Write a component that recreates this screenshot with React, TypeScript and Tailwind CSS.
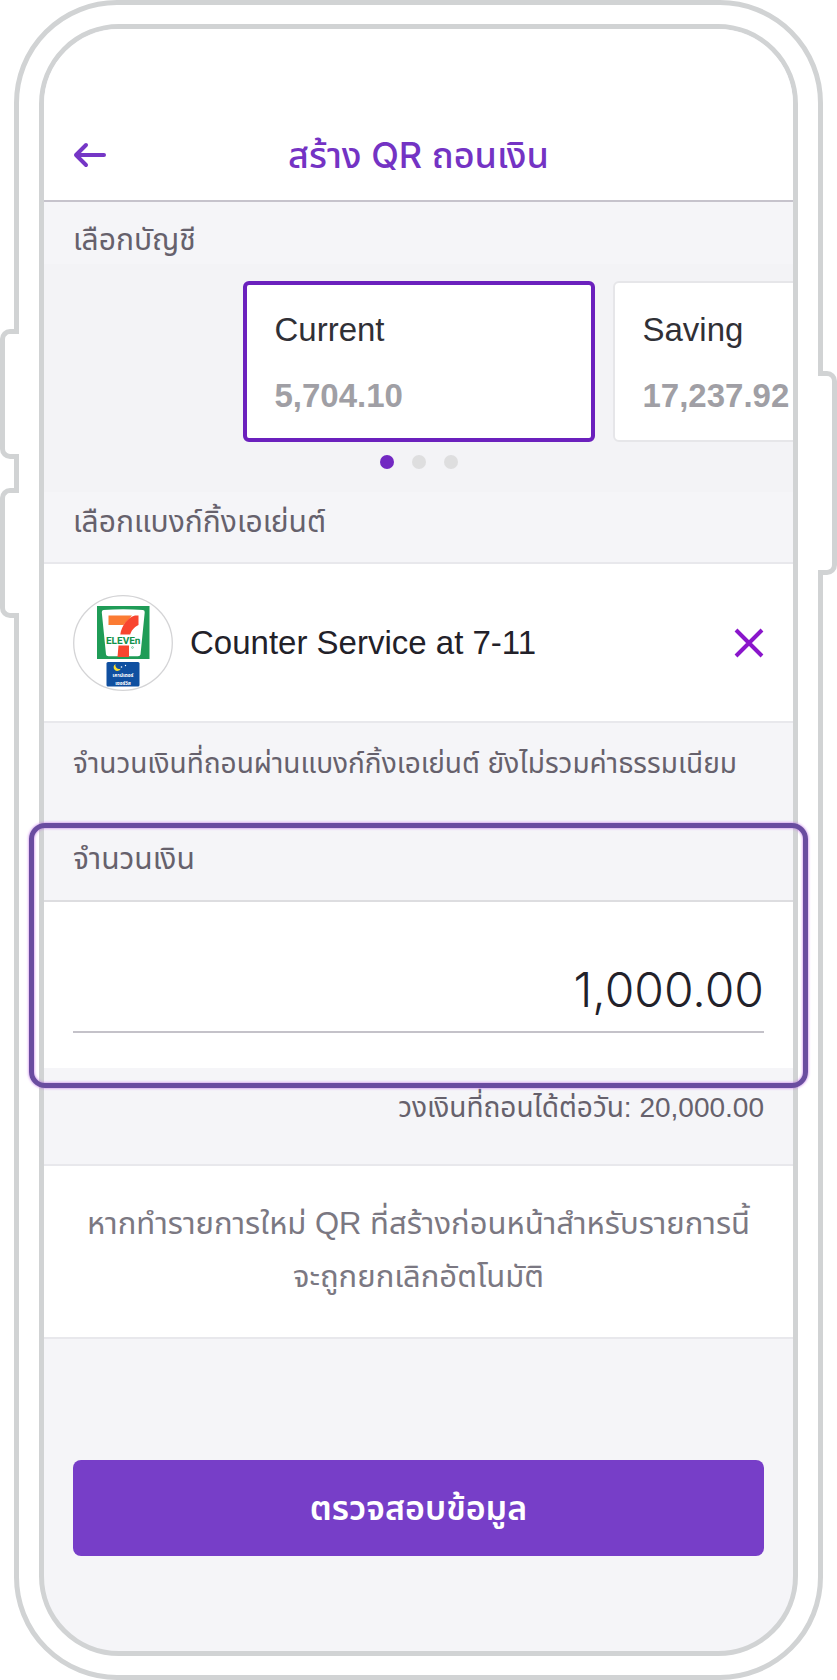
import { useState } from 'react';

const accounts = [
  { name: 'Current', balance: '5,704.10' },
  { name: 'Saving', balance: '17,237.92' },
];

function SevenElevenLogo() {
  return (
    <svg viewBox="0 0 100 96" className="h-[96px] w-[100px] shrink-0" role="img" aria-label="7-Eleven Counter Service">
      <ellipse cx="50" cy="48" rx="49.3" ry="47.3" fill="#fff" stroke="#d4d4d6" strokeWidth="1.3" />
      <rect x="24" y="11" width="52.5" height="53" fill="#1f9c57" />
      <path d="M30.5 15 Q50 13.6 70 15 Q72 15 71.7 17.5 L67.5 59.5 Q67.2 61.2 65 61.2 L35.5 61.2 Q33.3 61.2 33 59.5 L28.8 17.5 Q28.5 15 30.5 15 Z" fill="#fff" />
      <path d="M35.5 20.5 H59 L50.5 30 H35.5 Z" fill="#fb7b33" />
      <path d="M65.5 20.5 V30 C60.5 32.5 58.2 36 57.2 39.5 H47.3 C48.5 31 54.5 22.5 62 20.5 Z" fill="#f8452f" />
      <path d="M45.5 50.5 H56 V62 H44.5 Z" fill="#f8452f" />
      <text x="50.2" y="48.8" textAnchor="middle" fontFamily="Liberation Sans Narrow, Roboto, sans-serif" fontWeight="700" fontSize="10" textRendering="geometricPrecision" fill="#12924a">
        ELEVEn
      </text>
      <circle cx="59.5" cy="52.5" r="0.9" fill="none" stroke="#1f9c57" strokeWidth="0.5" />
      <rect x="33.5" y="67" width="33" height="24.5" rx="1.5" fill="#0f4fa0" />
      <path d="M42.5 69 A3.7 3.7 0 1 0 47.7 73.7 A3.8 3.8 0 0 1 42.5 69 Z" fill="#ffe02e" />
      <circle cx="48.5" cy="72" r="0.8" fill="#fff" />
      <circle cx="52.5" cy="70.5" r="0.7" fill="#fff" />
      <text x="50" y="82" textAnchor="middle" fontFamily="Noto Sans Thai" fontWeight="700" fontSize="5" fill="#fff">
        เคาน์เตอร์
      </text>
      <text x="50" y="90" textAnchor="middle" fontFamily="Noto Sans Thai" fontWeight="700" fontSize="5" fill="#fff">
        เซอร์วิส
      </text>
    </svg>
  );
}

export default function App() {
  const [selected, setSelected] = useState(0);
  const [amount, setAmount] = useState('1,000.00');

  return (
    <main className="bg-white px-[14px] font-['Liberation_Sans','Noto_Sans_Thai',sans-serif] text-[#66616c]">
      <div className="relative rounded-[103px] border-[5px] border-[#d1d3d4] px-[20px] py-[19px]">
        {/* Side buttons */}
        <div className="absolute top-[324px] -left-[19px] h-[130px] w-[19px] rounded-l-[10px] border-[5px] border-r-0 border-[#d1d3d4] bg-white" />
        <div className="absolute top-[483px] -left-[19px] h-[130px] w-[19px] rounded-l-[10px] border-[5px] border-r-0 border-[#d1d3d4] bg-white" />
        <div className="absolute top-[366px] -right-[19px] h-[204px] w-[19px] rounded-r-[10px] border-[5px] border-l-0 border-[#d1d3d4] bg-white" />

        {/* Screen */}
        <div className="rounded-[80px] border-[5px] border-[#d1d3d4] bg-[#f5f5f8]">
          <header className="grid grid-cols-[34px_1fr_34px] items-center rounded-t-[75px] border-b-2 border-[#c6c3cc] bg-white px-[29px] pt-[100px] pb-[19px]">
            <button type="button" aria-label="Back">
              <svg viewBox="0 0 34 26" className="h-[26px] w-[34px]" fill="none" stroke="#7536c6" strokeWidth="4" strokeLinecap="round" strokeLinejoin="round">
                <path d="M13 3 L3 13 L13 23 M3 13 H31" />
              </svg>
            </button>
            <h1 className="text-center font-['Inter','Noto_Sans_Thai',sans-serif] text-[36px] leading-[52px] font-medium text-[#7433c4]">
              สร้าง QR ถอนเงิน
            </h1>
          </header>

          <h2 className="px-[29px] pt-[18px] pb-[4px] text-[30px] leading-[40px]">เลือกบัญชี</h2>

          {/* Account carousel */}
          <div className="overflow-hidden bg-[#f3f3f6] pt-[17px] pb-[23px]">
            <div className="flex gap-[18px] pl-[calc(50%-176px)]">
              {accounts.map((account, i) => (
                <button
                  key={account.name}
                  type="button"
                  onClick={() => setSelected(i)}
                  className={`h-[161px] w-[352px] shrink-0 rounded-md bg-white px-[28px] pt-[2px] text-left ${
                    i === selected ? 'border-4 border-[#6b20bd]' : 'border-2 border-[#e6e6e9]'
                  }`}
                >
                  <span className="block text-[33px] leading-[66px] text-[#303036]">{account.name}</span>
                  <span className="block text-[33px] leading-[66px] font-bold text-[#a09fa5]">{account.balance}</span>
                </button>
              ))}
            </div>
            <div className="mt-[13px] flex justify-center gap-[18px]">
              {[0, 1, 2].map((i) => (
                <span key={i} className={`size-[14px] rounded-full ${i === selected ? 'bg-[#7228c2]' : 'bg-[#dededf]'}`} />
              ))}
            </div>
          </div>

          <h2 className="border-b-2 border-[#e8e8ec] px-[29px] pt-[10px] pb-[20px] text-[30px] leading-[40px]">เลือกแบงก์กิ้งเอเย่นต์</h2>

          <div className="flex items-center border-b-2 border-[#e8e8ec] bg-white px-[29px] pt-[31px] pb-[30px]">
            <SevenElevenLogo />
            <span className="ml-[17px] flex-1 text-[33px] leading-[40px] text-[#222129]">Counter Service at 7-11</span>
            <button type="button" aria-label="Remove agent">
              <svg viewBox="0 0 30 30" className="size-[30px]" fill="none" stroke="#8a16cb" strokeWidth="4">
                <path d="M2 2 L28 28 M28 2 L2 28" />
              </svg>
            </button>
          </div>

          <p className="px-[29px] pt-[21px] pb-[39px] text-[28px] leading-[40px]">จำนวนเงินที่ถอนผ่านแบงก์กิ้งเอเย่นต์ ยังไม่รวมค่าธรรมเนียม</p>

          {/* Amount */}
          <section className="relative pt-[16px]">
            <label htmlFor="amount" className="block px-[29px] pb-[21px] text-[30px] leading-[40px]">
              จำนวนเงิน
            </label>
            <div className="border-t-2 border-[#dddde0] bg-white px-[29px] pt-[50px] pb-[35px]">
              <input
                id="amount"
                type="text"
                inputMode="decimal"
                value={amount}
                onChange={(e) => setAmount(e.target.value)}
                className="block h-[81px] w-full border-b-2 border-[#c4c2c9] bg-transparent pb-[4px] text-right font-['Inter','Noto_Sans_Thai',sans-serif] text-[48px] font-light text-[#222129] outline-none"
              />
            </div>
            <div className="pointer-events-none absolute -inset-x-[15px] top-0 -bottom-[20px] rounded-[16px] border-[5px] border-[#6a4ca0] shadow-[0_0_3px_#c06ae8,inset_0_0_3px_#c06ae8]" />
          </section>

          <p className="px-[29px] pt-[20px] pb-[36px] text-right text-[28px] leading-[40px]">วงเงินที่ถอนได้ต่อวัน: 20,000.00</p>

          <p className="border-y-2 border-[#e8e8ec] bg-white px-[29px] pt-[31px] pb-[34px] text-center text-[31px] leading-[53px] text-[#7b7882]">
            หากทำรายการใหม่ QR ที่สร้างก่อนหน้าสำหรับรายการนี้
            <br />
            จะถูกยกเลิกอัตโนมัติ
          </p>

          <div className="px-[29px] pt-[121px] pb-[95px]">
            <button type="button" className="block h-[96px] w-full rounded-lg bg-[#773ec8] text-[34px] font-semibold text-white">
              ตรวจสอบข้อมูล
            </button>
          </div>
        </div>
      </div>
    </main>
  );
}
